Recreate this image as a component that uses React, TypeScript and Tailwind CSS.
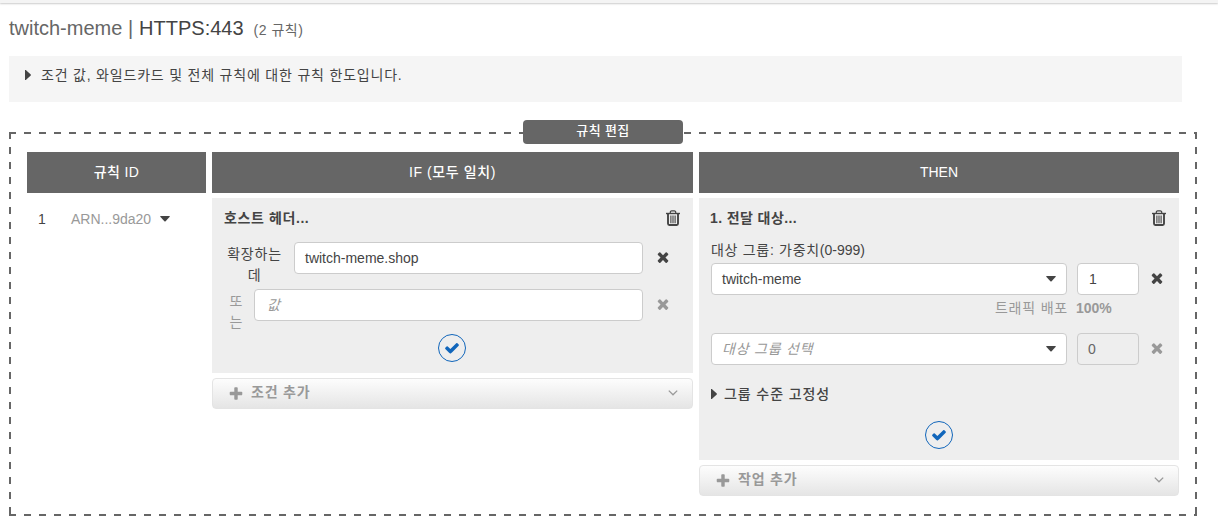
import type { ReactNode } from 'react'

const paths = {
  times:
    'M1490 1322q0 40-28 68l-136 136q-28 28-68 28t-68-28l-294-294-294 294q-28 28-68 28t-68-28l-136-136q-28-28-28-68t28-68l294-294-294-294q-28-28-28-68t28-68l136-136q28-28 68-28t68 28l294 294 294-294q28-28 68-28t68 28l136 136q28 28 28 68t-28 68l-294 294 294 294q28 28 28 68z',
  plus:
    'M1600 736v192q0 40-28 68t-68 28h-416v416q0 40-28 68t-68 28h-192q-40 0-68-28t-28-68v-416h-416q-40 0-68-28t-28-68v-192q0-40 28-68t68-28h416v-416q0-40 28-68t68-28h192q40 0 68 28t28 68v416h416q40 0 68 28t28 68z',
  check:
    'M1671 566q0 40-28 68l-724 724-136 136q-28 28-68 28t-68-28l-136-136-362-362q-28-28-28-68t28-68l136-136q28-28 68-28t68 28l294 295 656-657q28-28 68-28t68 28l136 136q28 28 28 68z',
}

function Icon({ name, className }: { name: keyof typeof paths; className: string }) {
  return (
    <svg viewBox="0 0 1792 1792" fill="currentColor" className={`shrink-0 ${className}`}>
      <path d={paths[name]} />
    </svg>
  )
}

function Trash() {
  return (
    <svg viewBox="0 0 14 16" fill="none" stroke="currentColor" className="mr-px h-4 w-[14px] shrink-0">
      <path d="M4.3 3V1.9Q4.5.8 5.6.8h2.8q1.1 0 1.3 1.1V3" strokeWidth="1.2" />
      <path d="M0 3.5h14" strokeWidth="1.4" />
      <path d="M2 3.5v10q0 1.5 1.3 1.5h7.4q1.3 0 1.3-1.5v-10" strokeWidth="1.9" />
      <path d="M4.9 5.5v7.8M7 5.5v7.8M9.1 5.5v7.8" strokeWidth="1.1" />
    </svg>
  )
}

function CaretDown({ className = '' }: { className?: string }) {
  return (
    <svg viewBox="0 0 10 6" fill="currentColor" className={`h-[6px] w-[10px] shrink-0 ${className}`}>
      <path d="M.6 0h8.8q.6.1.3.7L5.6 5.2q-.6.5-1.2 0L.3.7Q0 .1.6 0z" />
    </svg>
  )
}

function CaretRight() {
  return (
    <svg viewBox="0 0 6 10" fill="currentColor" className="h-[10px] w-[6px] shrink-0">
      <path d="M0 0h.8L5.8 4.5v1L.8 10H0z" />
    </svg>
  )
}

function ColumnHeader({ children }: { children: ReactNode }) {
  return (
    <div className="flex h-[41px] items-center justify-center bg-[#666] pb-0.5 font-medium text-white">
      {children}
    </div>
  )
}

function PanelTitle({ children }: { children: ReactNode }) {
  return (
    <div className="flex h-10 items-center justify-between font-bold">
      {children}
      <Trash />
    </div>
  )
}

function Confirm() {
  return (
    <button className="mx-auto flex size-7 items-center justify-center rounded-full border border-[#1166bb] text-[#1166bb]">
      <Icon name="check" className="size-4" />
    </button>
  )
}

function AddBar({ children }: { children: ReactNode }) {
  return (
    <button className="mt-[5px] flex h-[31px] w-full items-center rounded border border-[#e4e4e4] bg-linear-to-b from-[#fdfdfd] to-[#e5e5e5] pr-4 pl-[15px] font-bold text-[#999]">
      <Icon name="plus" className="size-4" />
      <span className="ml-[7px] pb-[3px] tracking-[0.8px]">{children}</span>
      <svg viewBox="0 0 10 6" fill="none" stroke="currentColor" strokeWidth="1.3" className="mr-[-2px] mb-0.5 ml-auto h-[6px] w-[10px]">
        <path d="M.8.6 5 4.8 9.2.6" />
      </svg>
    </button>
  )
}

export default function App() {
  return (
    <div className="h-[526px] w-[1218px] overflow-hidden bg-white font-['Liberation_Sans','Noto_Sans_CJK_KR',sans-serif] text-sm text-[#444]">
      <div className="h-[3px] bg-[#f4f4f4] shadow-[0_1px_2px_#ccc]" />

      <header className="mt-[9px] flex h-8 items-baseline pl-[9px] text-xl leading-8">
        <span className="text-[#666]">twitch-meme |</span>
        <span className="ml-[6px]">HTTPS:443</span>
        <span className="ml-[10px] text-sm tracking-[0.5px] text-[#666]">(2 규칙)</span>
      </header>

      <div className="mt-3 ml-[9px] flex h-[46px] w-[1173px] items-center bg-[#f5f5f5] pb-2 pl-4">
        <CaretRight />
        <span className="ml-[10px] tracking-[0.8px]">조건 값, 와일드카드 및 전체 규칙에 대한 규칙 한도입니다.</span>
      </div>

      {/* Rule editor, framed with 7px dashes every 15px */}
      <section className="relative mt-[30px] ml-[9px] h-[384px] w-[1188px] bg-[linear-gradient(90deg,#666_7px,transparent_7px),linear-gradient(90deg,#666_7px,transparent_7px),linear-gradient(#666_7px,transparent_7px),linear-gradient(#666_7px,transparent_7px)] bg-[size:15px_2px,15px_2px,2px_15px,2px_15px] bg-[position:0_0,0_100%,0_0,100%_0] [background-repeat:repeat-x,repeat-x,repeat-y,repeat-y] pt-5 pl-[18px]">
        <div className="absolute -top-3 left-[514px] flex h-6 w-40 items-center justify-center rounded bg-[#666] pb-0.5 text-[13px] font-medium tracking-[0.4px] text-white">
          규칙 편집
        </div>

        <div className="grid grid-cols-[179px_481px_480px] items-start gap-[6px]">
          <div>
            <ColumnHeader>
              <span className="tracking-[0.4px]">규칙 ID</span>
            </ColumnHeader>
            <div className="mt-[5px] flex h-[42px] items-center pl-[11px]">
              <span className="w-[33px]">1</span>
              <span className="text-[#999]">ARN...9da20</span>
              <CaretDown className="mb-px ml-[9px]" />
            </div>
          </div>

          <div>
            <ColumnHeader>
              <span className="tracking-[0.6px]">IF (모두 일치)</span>
            </ColumnHeader>
            <div className="mt-[5px] h-[175px] bg-[#eee] px-3">
              <PanelTitle>
                <span className="tracking-[0.6px]">호스트 헤더...</span>
              </PanelTitle>
              <div className="mt-1 flex h-[47px]">
                <div className="mr-[9px] w-[61px] pt-0.5 text-center leading-[21px] tracking-[0.8px] break-all">확장하는데</div>
                <div className="flex h-8 w-[349px] items-center rounded border border-[#ccc] bg-white px-[10px]">twitch-meme.shop</div>
                <Icon name="times" className="mt-[7px] ml-3 size-4" />
              </div>
              <div className="flex h-[45px]">
                <div className="mr-[6px] w-6 pt-0.5 text-center leading-[21px] text-[#999]">또<br />는</div>
                <div className="flex h-8 w-[389px] items-center rounded border border-[#ccc] bg-white px-3 text-[#999] italic">값</div>
                <Icon name="times" className="mt-[7px] ml-3 size-4 text-[#999]" />
              </div>
              <div className="pr-[2px]">
                <Confirm />
              </div>
            </div>
            <AddBar>조건 추가</AddBar>
          </div>

          <div>
            <ColumnHeader>THEN</ColumnHeader>
            <div className="mt-[5px] h-[262px] bg-[#eee] px-3">
              <PanelTitle>
                <span className="-ml-px tracking-[0.4px]">1. 전달 대상...</span>
              </PanelTitle>
              <div className="h-[25px] leading-6">
                <span className="tracking-[0.7px]">대상 그룹: 가중치</span>(0-999)
              </div>
              <div className="flex items-center">
                <div className="flex h-8 w-[356px] items-center justify-between rounded border border-[#ccc] bg-white px-[10px]">
                  twitch-meme
                  <CaretDown />
                </div>
                <div className="ml-[10px] flex h-8 w-[62px] items-center rounded border border-[#ccc] bg-white px-[11px]">1</div>
                <Icon name="times" className="mb-0.5 ml-[10px] size-4" />
              </div>
              <div className="flex h-[38px] text-[#999]">
                <span className="w-[357px] text-right leading-[26px] tracking-[0.8px]">트래픽 배포</span>
                <span className="ml-2 leading-[26px] font-bold">100%</span>
              </div>
              <div className="flex items-center">
                <div className="flex h-8 w-[356px] items-center justify-between rounded border border-[#ccc] bg-white px-[10px] text-[#999] italic">
                  <span className="tracking-[0.8px]">대상 그룹 선택</span>
                  <CaretDown className="text-[#444]" />
                </div>
                <div className="ml-[10px] flex h-8 w-[62px] items-center rounded border border-[#ccc] px-[10px] text-[#666]">0</div>
                <Icon name="times" className="mb-0.5 ml-[10px] size-4 text-[#999]" />
              </div>
              <div className="mt-[23px] mb-[21px] flex h-3 items-center font-medium">
                <CaretRight />
                <span className="ml-[7px] tracking-[0.9px]">그룹 수준 고정성</span>
              </div>
              <Confirm />
            </div>
            <AddBar>작업 추가</AddBar>
          </div>
        </div>
      </section>
    </div>
  )
}
